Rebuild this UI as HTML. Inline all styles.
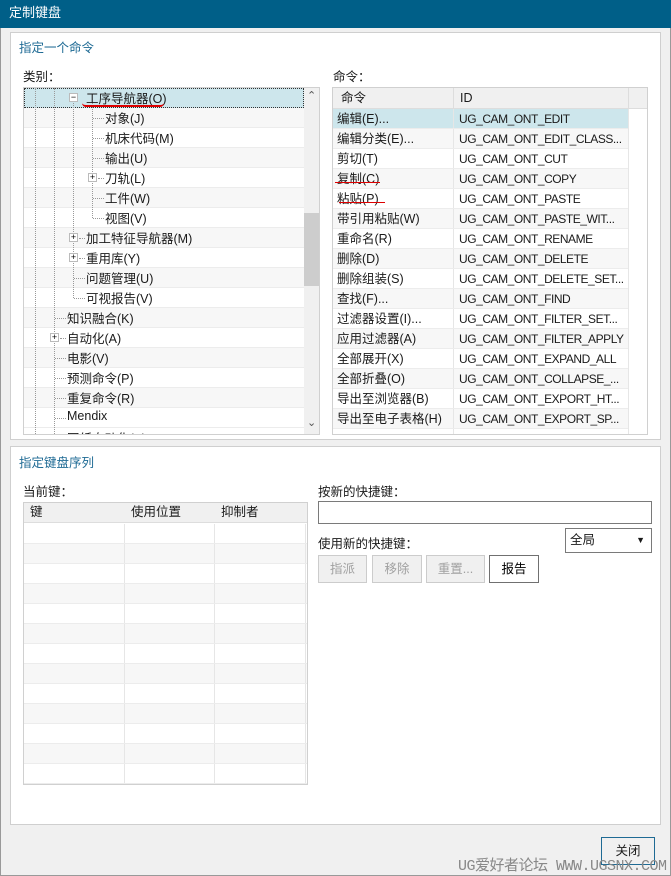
<!DOCTYPE html>
<html><head><meta charset="utf-8"><style>
*{box-sizing:border-box;margin:0;padding:0}
body{width:671px;height:876px;background:#f0f0f0;position:relative;overflow:hidden;font:12.5px "Liberation Sans","Noto Sans CJK SC",sans-serif;color:#1a1a1a}
.a{position:absolute}
.title{left:0;top:0;width:671px;height:28px;background:#005f88;color:#fff;font-size:13px;line-height:26px;padding-left:9px}
.win{left:0;top:28px;width:671px;height:848px;border-left:1px solid #999;border-bottom:1px solid #999;border-right:1px solid #999}
.grp{background:#fff;border:1px solid #cfcfcf}
.gt{color:#1e6a94;font-size:12.5px}
.box{background:#fff;border:1px solid #d0d0d0;overflow:hidden}
.r{position:absolute;left:0;height:20px;border-bottom:1px solid #ececec;line-height:19px;white-space:nowrap}
.alt{background:#f7f7f7}
.dv{position:absolute;border-left:1px dotted #999;width:0}
.dh{position:absolute;border-top:1px dotted #999;height:0;top:10px}
.pb{position:absolute;width:9px;height:9px;border:1px solid #bbb;background:#fff;top:5px;font-size:9px;line-height:7px;text-align:center;color:#000}
.btn{position:absolute;height:28px;border:1px solid #ccc;background:#f0f0f0;color:#a0a0a0;text-align:center;line-height:26px}
.cell{position:absolute;top:0;height:100%;border-left:1px solid #e6e6e6}
.tl{position:absolute;margin-top:-1px}
.id{font-size:12px;letter-spacing:-0.45px;width:168px;overflow:hidden}
</style></head><body>
<div class="a title">定制键盘</div>
<div class="a win"></div>
<div class="a grp" style="left:10px;top:32px;width:651px;height:408px"></div>
<div class="a gt" style="left:19px;top:37px">指定一个命令</div>
<div class="a" style="left:23px;top:66px">类别：</div>
<div class="a" style="left:333px;top:66px">命令：</div>

<!-- tree -->
<div class="a box" style="left:23px;top:87px;width:297px;height:348px">
<div class="r" style="top:0;width:280px;background:#cde6ec;border:1px dotted #333"></div>
<div class="r alt" style="top:20px;width:280px"></div><div class="r" style="top:40px;width:280px"></div><div class="r alt" style="top:60px;width:280px"></div><div class="r" style="top:80px;width:280px"></div><div class="r alt" style="top:100px;width:280px"></div><div class="r" style="top:120px;width:280px"></div><div class="r alt" style="top:140px;width:280px"></div><div class="r" style="top:160px;width:280px"></div><div class="r alt" style="top:180px;width:280px"></div><div class="r" style="top:200px;width:280px"></div><div class="r alt" style="top:220px;width:280px"></div><div class="r" style="top:240px;width:280px"></div><div class="r alt" style="top:260px;width:280px"></div><div class="r" style="top:280px;width:280px"></div><div class="r alt" style="top:300px;width:280px"></div><div class="r" style="top:320px;width:280px"></div>
<div class="dv" style="left:11px;top:0;height:348px"></div>
<div class="dv" style="left:30px;top:0;height:348px"></div>
<div class="dv" style="left:49px;top:10px;height:200px"></div>
<div class="dv" style="left:68px;top:15px;height:115px"></div>
<div class="pb" style="left:45px;top:5px">−</div>
<div class="tl" style="left:62px;top:1px">工序导航器(O)</div>
<div class="a" style="left:58px;top:15px;width:82px;height:4px;border-bottom:2px solid #d00;border-radius:0 0 40px 40px"></div>
<div class="dh" style="left:69px;top:30px;width:11px"></div><div class="tl" style="left:81px;top:21px">对象(J)</div>
<div class="dh" style="left:69px;top:50px;width:11px"></div><div class="tl" style="left:81px;top:41px">机床代码(M)</div>
<div class="dh" style="left:69px;top:70px;width:11px"></div><div class="tl" style="left:81px;top:61px">输出(U)</div>
<div class="pb" style="left:64px;top:85px">+</div><div class="dh" style="left:74px;top:90px;width:6px"></div><div class="tl" style="left:81px;top:81px">刀轨(L)</div>
<div class="dh" style="left:69px;top:110px;width:11px"></div><div class="tl" style="left:81px;top:101px">工件(W)</div>
<div class="dh" style="left:69px;top:130px;width:11px"></div><div class="tl" style="left:81px;top:121px">视图(V)</div>
<div class="pb" style="left:45px;top:145px">+</div><div class="dh" style="left:55px;top:150px;width:6px"></div><div class="tl" style="left:62px;top:141px">加工特征导航器(M)</div>
<div class="pb" style="left:45px;top:165px">+</div><div class="dh" style="left:55px;top:170px;width:6px"></div><div class="tl" style="left:62px;top:161px">重用库(Y)</div>
<div class="dh" style="left:50px;top:190px;width:11px"></div><div class="tl" style="left:62px;top:181px">问题管理(U)</div>
<div class="dh" style="left:50px;top:210px;width:11px"></div><div class="tl" style="left:62px;top:201px">可视报告(V)</div>
<div class="dh" style="left:31px;top:230px;width:11px"></div><div class="tl" style="left:43px;top:221px">知识融合(K)</div>
<div class="pb" style="left:26px;top:245px">+</div><div class="dh" style="left:36px;top:250px;width:6px"></div><div class="tl" style="left:43px;top:241px">自动化(A)</div>
<div class="dh" style="left:31px;top:270px;width:11px"></div><div class="tl" style="left:43px;top:261px">电影(V)</div>
<div class="dh" style="left:31px;top:290px;width:11px"></div><div class="tl" style="left:43px;top:281px">预测命令(P)</div>
<div class="dh" style="left:31px;top:310px;width:11px"></div><div class="tl" style="left:43px;top:301px">重复命令(R)</div>
<div class="dh" style="left:31px;top:330px;width:11px"></div><div class="tl" style="left:43px;top:322px">Mendix</div>
<div class="tl" style="left:43px;top:341px">图纸自动化(A)</div>
<div class="a" style="left:280px;top:0;width:16px;height:347px;background:#f0f0f0"></div>
<div class="a" style="left:280px;top:125px;width:16px;height:73px;background:#cdcdcd"></div>
<div class="a" style="left:283px;top:1px;font-size:11px;color:#555">⌃</div>
<div class="a" style="left:283px;top:328px;font-size:11px;color:#555">⌄</div>
</div>

<!-- command list -->
<div class="a box" style="left:332px;top:87px;width:316px;height:348px">
<div class="r" style="top:0;width:316px;height:21px;background:#f0f0f0;border-bottom:1px solid #ddd;line-height:21px"><span class="a" style="left:8px">命令</span><span class="a" style="left:127px">ID</span><div class="cell" style="left:120px;border-color:#ddd"></div><div class="cell" style="left:295px;border-color:#ddd"></div></div>
<div id="rows"></div>
</div>

<div class="a grp" style="left:10px;top:446px;width:651px;height:379px"></div>
<div class="a gt" style="left:19px;top:452px">指定键盘序列</div>
<div class="a" style="left:23px;top:481px">当前键：</div>
<div class="a box" style="left:23px;top:502px;width:285px;height:283px">
<div class="r" style="top:0;width:285px;background:#f0f0f0;border-bottom:1px solid #ddd"><span class="a" style="left:6px">键</span><span class="a" style="left:107px">使用位置</span><span class="a" style="left:197px">抑制者</span></div>
<div id="krows"></div>
</div>
<div class="a" style="left:318px;top:481px">按新的快捷键：</div>
<div class="a" style="left:318px;top:501px;width:334px;height:23px;border:1px solid #7a7a7a;background:#fff"></div>
<div class="a" style="left:318px;top:533px">使用新的快捷键：</div>
<div class="a" style="left:565px;top:528px;width:87px;height:25px;border:1px solid #7a7a7a;background:#fff;padding-left:4px;line-height:23px">全局<span class="a" style="right:6px;top:0;font-size:9px">▼</span></div>
<div class="btn" style="left:318px;top:555px;width:49px">指派</div>
<div class="btn" style="left:372px;top:555px;width:50px">移除</div>
<div class="btn" style="left:426px;top:555px;width:59px">重置...</div>
<div class="btn" style="left:489px;top:555px;width:50px;border-color:#707070;background:#fff;color:#000">报告</div>
<div class="btn" style="left:601px;top:837px;width:54px;border-color:#1e6a94;color:#1a1a1a;background:#f0f0f0">关闭</div>
<div class="a" style="left:458px;top:854px;font:15px 'Liberation Mono','Noto Sans CJK SC',monospace;color:#888;letter-spacing:-0.5px">UG爱好者论坛 WWW.UGSNX.COM</div>
<script>
var d=[["编辑(E)...","UG_CAM_ONT_EDIT"],["编辑分类(E)...","UG_CAM_ONT_EDIT_CLASS..."],["剪切(T)","UG_CAM_ONT_CUT"],["复制(C)","UG_CAM_ONT_COPY"],["粘贴(P)","UG_CAM_ONT_PASTE"],["带引用粘贴(W)","UG_CAM_ONT_PASTE_WIT..."],["重命名(R)","UG_CAM_ONT_RENAME"],["删除(D)","UG_CAM_ONT_DELETE"],["删除组装(S)","UG_CAM_ONT_DELETE_SET..."],["查找(F)...","UG_CAM_ONT_FIND"],["过滤器设置(I)...","UG_CAM_ONT_FILTER_SET..."],["应用过滤器(A)","UG_CAM_ONT_FILTER_APPLY"],["全部展开(X)","UG_CAM_ONT_EXPAND_ALL"],["全部折叠(O)","UG_CAM_ONT_COLLAPSE_..."],["导出至浏览器(B)","UG_CAM_ONT_EXPORT_HT..."],["导出至电子表格(H)","UG_CAM_ONT_EXPORT_SP..."],["",""]];
var h="";d.forEach(function(x,i){var bg=i==0?"background:#cde6ec;":(i%2?"background:#f7f7f7;":"");
h+='<div class="r" style="top:'+(21+i*20)+'px;width:296px;line-height:21px;'+bg+'"><span class="a" style="left:4px">'+x[0]+'</span><span class="a id" style="left:126px">'+x[1]+'</span><div class="cell" style="left:120px"></div></div>';});
h+='<div class="a" style="left:295px;top:21px;width:21px;height:330px;background:#fff;border-left:1px solid #e6e6e6"></div>';
h+='<div class="a" style="left:2px;top:94px;width:45px;border-top:1.5px solid #d00"></div><div class="a" style="left:6px;top:114px;width:46px;border-top:1.5px solid #d00"></div>';
document.getElementById("rows").innerHTML=h;
var k="";for(var i=0;i<13;i++){k+='<div class="r'+(i%2?' alt':'')+'" style="top:'+(21+i*20)+'px;width:285px"><div class="cell" style="left:100px"></div><div class="cell" style="left:190px"></div><div class="cell" style="left:281px"></div></div>';}
document.getElementById("krows").innerHTML=k;
</script>
</body></html>
